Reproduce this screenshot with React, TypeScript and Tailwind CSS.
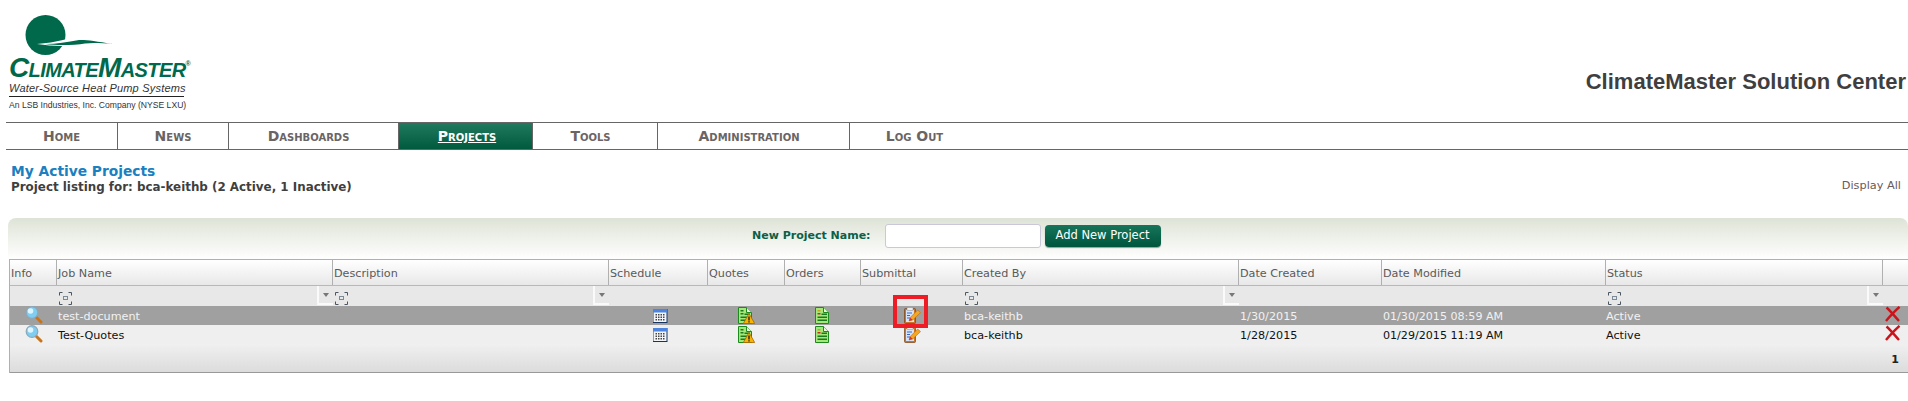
const NAV = [
  { label: "Home", width: "w-[112px]", pad: "" },
  { label: "News", width: "w-[111px]", pad: "" },
  { label: "Dashboards", width: "w-[170px]", pad: "pr-[10px]" },
  { label: "Projects", width: "w-[134px]", pad: "pl-[3px]", active: true },
  { label: "Tools", width: "w-[125px]", pad: "pr-[9px]" },
  { label: "Administration", width: "w-[192px]", pad: "pr-[9px]" },
  { label: "Log Out", width: "w-[125px]", pad: "pl-[4px]" },
];

const COLS = "grid grid-cols-[47px_276px_276px_99px_77px_76px_102px_276px_143px_224px_277px_26px]";

const HEADERS = ["Info", "Job Name", "Description", "Schedule", "Quotes", "Orders", "Submittal", "Created By", "Date Created", "Date Modified", "Status", ""];

const ROWS = [
  { name: "test-document", created: "1/30/2015", modified: "01/30/2015 08:59 AM", selected: true },
  { name: "Test-Quotes", created: "1/28/2015", modified: "01/29/2015 11:19 AM", selected: false },
];

function Magnifier() {
  return (
    <svg width="18" height="18" viewBox="0 0 18 18">
      <path d="M11 11l5 5" stroke="#c9741a" strokeWidth="3" strokeLinecap="round" />
      <circle cx="7" cy="6.5" r="5.8" fill="#7fcdf0" stroke="#8aa8bd" strokeWidth="1.2" />
      <circle cx="5.5" cy="5" r="2.8" fill="#dff5ff" />
    </svg>
  );
}

function Calendar() {
  return (
    <svg width="15" height="14" viewBox="0 0 15 14">
      <rect x="0" y="0" width="14.5" height="14" fill="#16345f" />
      <rect x="0" y="0" width="13.5" height="13" fill="#f2f6fb" />
      <rect x="0" y="0" width="1" height="13" fill="#7d9fd0" />
      <rect x="0" y="0" width="14" height="3.5" fill="#4d84e0" />
      {[5, 7.5, 10].map((y) =>
        [2.5, 5, 7.5, 10].map((x) => <rect key={`${x}-${y}`} x={x} y={y} width="1.5" height="1.5" fill="#444" />)
      )}
    </svg>
  );
}

function Sheet({ warn }: { warn?: boolean }) {
  return (
    <svg width="17" height="17" viewBox="0 0 17 17">
      <path d="M.5.5h8l5 5v11H.5z" fill="#a4e87c" stroke="#1c8a1c" />
      <path d="M8.5.5v5h5" fill="#e8fbd8" stroke="#1c8a1c" />
      <rect x="2.5" y="3" width="3" height="1.5" fill={warn ? "#1c7a1c" : "#c9a020"} />
      <rect x="2.5" y="6" width="3" height="1.5" fill={warn ? "#1c7a1c" : "#c03020"} />
      <rect x="6.5" y="6.5" width="5.5" height="1.5" fill="#1c7a1c" />
      <rect x="2.5" y="9.5" width="9.5" height="1.5" fill="#1c7a1c" />
      <rect x="2.5" y="12.5" width="9.5" height="1.5" fill="#1c7a1c" />
      {warn && (
        <>
          <path d="M11 6.5l5.7 10H5.3z" fill="#f7b500" stroke="#a86400" strokeWidth="0.8" />
          <rect x="10.3" y="9.5" width="1.4" height="4" fill="#222" />
          <rect x="10.3" y="14.2" width="1.4" height="1.3" fill="#222" />
        </>
      )}
    </svg>
  );
}

function Clipboard() {
  return (
    <svg width="17" height="17" viewBox="0 0 17 17">
      <rect x="0.5" y="1.5" width="11" height="15" rx="1" fill="#c8742a" stroke="#7a4216" strokeWidth="0.7" />
      <rect x="2" y="3" width="8" height="12" fill="#d6e4fa" />
      <rect x="3" y="0.5" width="6" height="3" fill="#ececec" stroke="#888" strokeWidth="0.5" />
      <path d="M3 6h5M3 8.5h3M3 11h3" stroke="#3b64c8" />
      <path d="M5 14l1.2-3.5L13.7 3l2.8 2.6-7.5 7.2z" fill="#f5a623" stroke="#c06a10" strokeWidth="0.6" />
      <path d="M5 14l1.2-3.5 2.5 2.4z" fill="#d8352a" />
    </svg>
  );
}

function Cross() {
  return (
    <svg width="16" height="16" viewBox="0 0 16 16">
      <path d="M1.5 1.5c4 3.5 8 8.5 12.5 13.5M14.5 .8C10 5 5 10 1 15" stroke="#c9141c" strokeWidth="2.4" fill="none" />
    </svg>
  );
}

function FilterIcon() {
  return (
    <svg width="13" height="13" viewBox="0 0 13 13" fill="none" stroke="#4a5560">
      <path d="M.5 3.5v-3h3M9.5.5h3v3M12.5 9.5v3h-3M3.5 12.5h-3v-3" />
      <rect x="4.5" y="4.5" width="4" height="3" stroke="#7a8a98" />
    </svg>
  );
}

function DropButton() {
  return (
    <div className="w-[16px] h-[19px] bg-[#e8e8e8] border-l-2 border-b-2 border-[#fafafa] flex items-center justify-center">
      <div className="w-0 h-0 border-x-[3px] border-x-transparent border-t-[4px] border-t-[#777]" />
    </div>
  );
}

function Logo() {
  return (
    <div className="w-[202px] pl-[9px] pt-[15px] h-[122px] shrink-0 flex flex-col">
      <svg width="90" height="41" viewBox="0 0 90 41" className="ml-[16px] shrink-0">
        <circle cx="20.5" cy="20" r="20" fill="#00694b" />
        <path d="M12 29c10-1 18-2 26-4 8-3 14-3 20-2 8 1 12 4 30 6-12 0-20-1-28 0-10 2-30 3-48 0z" fill="#ffffff" />
        <path d="M20 29c12 0 22-2 34-4 6-.5 16 1 34 4-12-1-20-1.5-28-.5-10 1.5-26 2.5-40 .5z" fill="#00694b" />
      </svg>
      <div className="h-[22px] leading-[22px] mt-[1px] text-[#00694b] font-['Liberation_Sans',sans-serif] font-bold italic text-[28px] tracking-[-0.6px] whitespace-nowrap [font-variant:small-caps]">
        ClimateMaster<span className="align-top text-[7px] leading-[14px] not-italic">®</span>
      </div>
      <div className="w-[175px] mt-[3px] h-[13px] leading-[13px] text-[#333] font-['Liberation_Sans',sans-serif] italic text-[11px] tracking-[0.2px] whitespace-nowrap">
        Water-Source Heat Pump Systems
      </div>
      <div className="w-[175px] mt-[1px] h-px bg-[#222]" />
      <div className="mt-[2px] leading-[12px] text-[#333] font-['Liberation_Sans',sans-serif] text-[8.6px] whitespace-nowrap">
        An LSB Industries, Inc. Company (NYSE LXU)
      </div>
    </div>
  );
}

export default function App() {
  return (
    <div className="relative w-[1908px] h-[401px] overflow-hidden bg-white font-['DejaVu_Sans',Verdana,sans-serif] text-[11px]">
      {/* Header */}
      <div className="h-[122px] flex items-start">
        <Logo />
        <div className="ml-auto mt-[69px] pr-[2px] font-['Liberation_Sans',sans-serif] font-bold text-[22px] leading-[26px] text-[#3f3f3f]">
          ClimateMaster Solution Center
        </div>
      </div>

      {/* Nav */}
      <div className="ml-[6px] h-[28px] flex border-y border-[#666]">
        {NAV.map((n) => (
          <div
            key={n.label}
            className={
              n.active
                ? `${n.width} ${n.pad} flex items-center justify-center bg-gradient-to-b from-[#1f7a5e] to-[#005a3e] text-white underline font-bold text-[14px] [font-variant:small-caps] border-r border-[#666]`
                : `${n.width} ${n.pad} flex items-center justify-center text-[#6b6464] font-bold text-[14px] [font-variant:small-caps] border-r border-[#666] last:border-r-0`
            }
          >
            {n.label}
          </div>
        ))}
      </div>

      {/* Title */}
      <div className="h-[68px] pl-[11px] pt-[13px] flex items-start">
        <div>
          <div className="text-[#1a80c0] font-bold text-[13.8px] leading-[16px]">My Active Projects</div>
          <div className="text-[#3f3f3f] font-bold text-[11.9px] leading-[16px]">Project listing for: bca-keithb (2 Active, 1 Inactive)</div>
        </div>
        <div className="ml-auto mt-[15px] pr-[7px] text-[#6a5a5a] text-[11.3px]">Display All</div>
      </div>

      {/* New project band */}
      <div className="ml-[8px] h-[41px] rounded-t-[8px] bg-gradient-to-b from-[#dee3d6] to-[#ffffff] flex items-center pl-[744px] pb-[5px]">
        <span className="font-bold text-[11px] text-[#0a6048]">New Project Name:</span>
        <div className="ml-[14px] w-[156px] h-[24px] bg-white border border-[#c8c8d8] rounded-[3px]" />
        <button className="ml-[4px] h-[22px] w-[116px] rounded-[4px] bg-gradient-to-b from-[#16755a] to-[#00553d] text-white text-[11.5px] shadow-[0_1px_1px_#999]">
          Add New Project
        </button>
      </div>

      {/* Grid */}
      <div className="ml-[9px] w-[1899px] border-t border-l border-[#b0b0b0]">
        <div className={`${COLS} h-[26px] bg-gradient-to-b from-[#ffffff] to-[#e8e8e8] border-b border-[#b8b8b8]`}>
          {HEADERS.map((h, i) => (
            <div key={i} className="pl-[1px] border-r border-[#b0b0b0] last:border-r-0 leading-[27px] text-[#5a5a5a] text-[11.2px] whitespace-nowrap overflow-hidden">
              {h}
            </div>
          ))}
        </div>
        <div className={`${COLS} h-[20px] bg-[#e8e8e8]`}>
          {[0, 1, 2, 3, 4, 5, 6, 7, 8, 9, 10, 11].map((i) => (
            <div key={i} className="flex items-start justify-between pl-[2px]">
              {(i === 1 || i === 2 || i === 7 || i === 10) && (
                <>
                  <span className="mt-[6px]"><FilterIcon /></span>
                  <DropButton />
                </>
              )}
            </div>
          ))}
        </div>
        {ROWS.map((r) => (
          <div
            key={r.name}
            className={
              r.selected
                ? `${COLS} h-[19px] bg-[#a0a0a0] text-[#f2f2f2] items-center`
                : `${COLS} h-[19px] bg-[#efefef] text-[#111] items-center`
            }
          >
            <div className="h-[19px] flex justify-center"><Magnifier /></div>
            <div className="pl-[1px] pt-[3px] text-[11.2px]">{r.name}</div>
            <div />
            <div className="flex justify-center pl-[3px]"><Calendar /></div>
            <div className="flex justify-center"><Sheet warn /></div>
            <div className="flex justify-center"><Sheet /></div>
            <div className="flex justify-center pl-[1px]"><Clipboard /></div>
            <div className="pl-[1px] pt-[3px] text-[11.2px]">bca-keithb</div>
            <div className="pl-[1px] pt-[3px] text-[11.2px]">{r.created}</div>
            <div className="pl-[1px] pt-[3px] text-[11.1px]">{r.modified}</div>
            <div className="pt-[3px] text-[11.2px]">Active</div>
            <div className="self-start flex justify-center pr-[7px]"><Cross /></div>
          </div>
        ))}
        <div className="h-[29px] bg-gradient-to-b from-[#f0f0f0] to-[#dcdcdc] border-b border-[#999] flex justify-end items-center pr-[9px] pt-[4px]">
          <span className="font-bold text-[11px] text-[#222]">1</span>
        </div>
      </div>

      {/* Red highlight over the submittal icon */}
      <div className="absolute left-[893px] top-[295px] w-[35px] h-[33px] border-[4px] border-[#ee1c25]" />
    </div>
  );
}
